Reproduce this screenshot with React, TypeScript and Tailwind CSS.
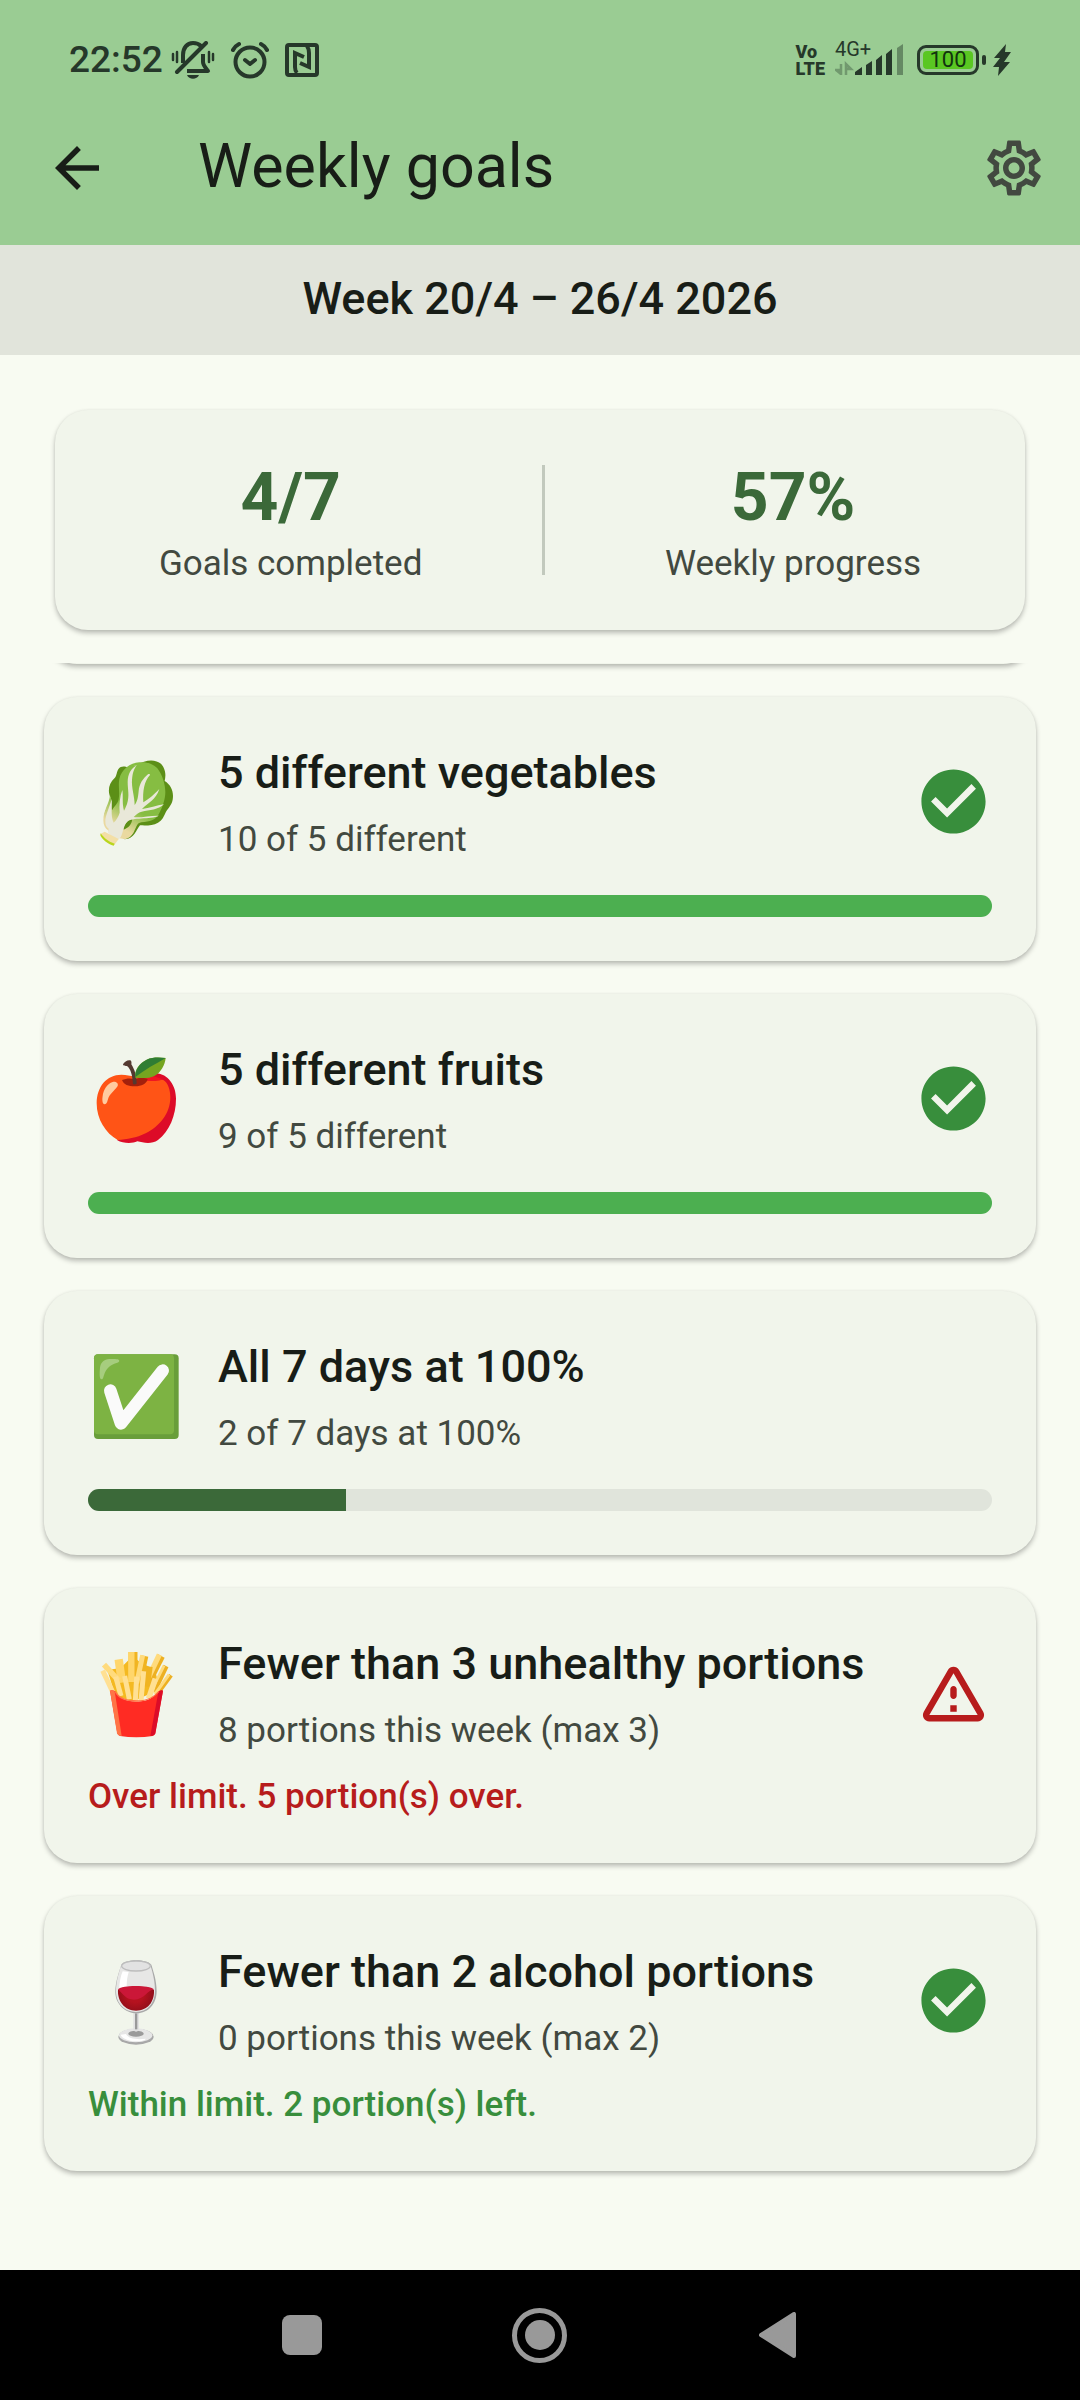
import type { ReactNode } from 'react';
import { MdArrowBack, MdCheckCircle, MdOutlineSettings } from 'react-icons/md';

type GoalStatus = 'done' | 'open' | 'over';

interface Goal {
  id: string;
  emoji: ReactNode;
  title: string;
  subtitle: string;
  status: GoalStatus;
  /** Share of the goal reached, 0 to 1. Limit goals have a note instead. */
  progress?: number;
  note?: string;
}

/* ---------- Emoji drawings ---------- */

function LeafyGreenEmoji() {
  return (
    <svg viewBox="96 50 270 270" className="size-[90px]" aria-hidden="true">
      <defs>
        <linearGradient id="leaf" x1="270" y1="90" x2="160" y2="290" gradientUnits="userSpaceOnUse">
          <stop offset="0.55" stopColor="#86bd42" />
          <stop offset="0.85" stopColor="#ead9a0" />
        </linearGradient>
      </defs>
      <path
        d="M252 64c22-8 48-4 58 16 8 16 7 28 4 42 20 12 28 34 24 56-3 16-14 26-20 36-6 14-12 26-24 33-16 9-36 9-54 8-12 14-16 40-46 42l-40-30c-14-12-24-28-20-46 4-20 16-32 18-48-10-20-6-44 12-60 6-6 6-20 12-28 6-8 20-8 28-2z"
        fill="#5c8f17"
      />
      <path
        d="M150 165c-2 25-20 45-20 75 0 15 6 25 14 30l14 20 34 6c14 0 24-10 30-22 8-14 8-26 22-28 26-2 42-6 52-24 10-17 20-44 20-66 0-22-8-52-24-72-12-14-34-20-54-18-28 2-54 22-60 50-4 20 2 40-2 60-2 14-14 22-20 34-4-16 0-30-6-45z"
        fill="url(#leaf)"
      />
      <path d="M190 260c8-14 14-22 27-25-2 16-10 26-26 33z" fill="#5c8f17" />
      <path
        d="M231 75c-18 8-28 28-28 50 0 24 6 40-2 66-4 10-6 15-9 20-6-20-2-45-5-62-8 20-10 46-8 68-4 12-10 22-18 30-10-20-4-50-6-72-4 20-20 50-19 70 0 10 4 16 10 20l-2 12 26 24 12-10c8-16 8-36 20-47 14-14 68-6 95-18-26-1-60 8-76 4 8-8 14-14 24-16 24-4 50-6 67-22-22 3-44 12-66 14 18-18 42-28 52-60-16 16-28 28-48 40-2-34 2-62 20-82 0-4-4-4-6-2-16 14-26 28-28 50-2 20-4 32-12 42 0-24-10-54-8-76 2-18 4-28 12-40 0-4-3-5-5-3z"
        fill="#e9e8d9"
      />
      <path d="M134 274l42 22-14 19c-18-8-30-18-41-34z" fill="#f3dfa6" />
      <path d="M122 279c10 14 24 26 42 31l-3 6c-18-4-34-18-40-31z" fill="#b9d61c" />
    </svg>
  );
}

function AppleEmoji() {
  return (
    <svg viewBox="66 70 270 270" className="size-[90px]" aria-hidden="true">
      <path
        d="M194 138c20-4 38-10 64-10 36 2 60 36 60 76 0 50-20 98-54 124-20 14-44 8-62 4-16 8-44 6-60-3l18-186z"
        fill="#dd0b28"
      />
      <path
        d="M80 218c0-50 30-86 74-86 16 0 26 4 40 4s24-4 38 0l-4 10c20 6 36 0 52 2 14 8 21 30 21 52 0 50-34 88-74 108-28 14-56 18-84 20-36-20-63-62-63-110z"
        fill="#ff5416"
      />
      <path d="M194 150c16-14 40-22 84-4-12 8-30 4-46 4z" fill="#ef1622" />
      <path
        d="M156 148c14-6 28-6 38-2 14-6 28-6 39 0-4 14-18 21-38 21s-34-5-39-19z"
        fill="#a3200c"
      />
      <path
        d="M159 101c4-8 14-14 22-12 4 2 4 8 3 12 10 16 16 34 16 58-4 3-8 3-11 1-2-26-6-44-18-54-4 0-12 0-12-5z"
        fill="#543930"
      />
      <path d="M196 141c-4-22 12-44 34-54 18-8 38-7 57-5-2 20-14 44-34 54-18 9-40 6-57 5z" fill="#75a520" />
      <path d="M196 139c-2-22 14-42 34-52 18-8 38-7 57-5-30 18-62 34-91 57z" fill="#2f7d33" />
      <path
        d="M98 196c2-18 14-38 30-42 10-2 18 4 15 12-4 8-20 20-27 34-4 10-4 20-12 21-7 0-8-14-6-25z"
        fill="#ffcba0"
      />
    </svg>
  );
}

function CheckMarkEmoji() {
  return (
    <svg viewBox="66 62 270 270" className="size-[90px]" aria-hidden="true">
      <rect x="72" y="72" width="254" height="254" rx="12" fill="#699e3a" />
      <path d="M84 72h216q12 0 12 12v216q0 12-12 12H84q-12 0-12-12V84q0-12 12-12z" fill="#7db343" />
      <path
        d="M90 112c2-16 12-25 28-26 12 0 22-1 28 2 4 3 1 7-4 9-20 6-32 16-38 32-4 10-4 18-9 18-8 0-6-22-5-35z"
        fill="#a6cd7e"
      />
      <path
        d="M121 181L153 279L278 121"
        fill="none"
        stroke="#fafafa"
        strokeWidth="38"
        strokeLinecap="round"
        strokeLinejoin="round"
      />
    </svg>
  );
}

function FriesEmoji() {
  return (
    <svg viewBox="66 52 270 270" className="size-[90px]" aria-hidden="true">
      <path d="M112 118l40-6 36-36 24 20 42 20 16 60-80 36-54-16z" fill="#f4b921" />
      <g fill="none" strokeLinecap="butt">
        <path d="M189 64v90" stroke="#f0b422" strokeWidth="27" />
        <path d="M184 64v90" stroke="#ffd66b" strokeWidth="19" />
        <path d="M224 76l-18 84" stroke="#f0b422" strokeWidth="22" />
        <path d="M218 74l-18 84" stroke="#ffdb7d" strokeWidth="15" />
        <path d="M274 76l-40 80" stroke="#edb022" strokeWidth="22" />
        <path d="M268 72l-38 80" stroke="#ffdb7d" strokeWidth="16" />
        <path d="M146 86l10 70" stroke="#ffd66b" strokeWidth="25" />
        <path d="M102 102l44 48" stroke="#ffdb7d" strokeWidth="17" />
        <path d="M238 108l-8 60" stroke="#f0b422" strokeWidth="20" />
        <path d="M288 106l-36 76" stroke="#edb022" strokeWidth="16" />
        <path d="M282 105l-36 72" stroke="#ffdb7d" strokeWidth="9" />
        <path d="M303 134l-44 60" stroke="#edb022" strokeWidth="13" />
        <path d="M297 132l-42 58" stroke="#ffdb7d" strokeWidth="9" />
        <path d="M98 120l30 64" stroke="#ffe093" strokeWidth="15" />
        <path d="M137 138l16 58" stroke="#ffe093" strokeWidth="15" />
        <path d="M164 136l14 70" stroke="#ffe093" strokeWidth="15" />
        <path d="M200 138l-4 74" stroke="#ffe093" strokeWidth="15" />
        <path d="M221 122l-8 88" stroke="#ffe093" strokeWidth="15" />
        <path d="M256 144l-20 60" stroke="#ffe093" strokeWidth="17" />
      </g>
      <path
        d="M120 180q6-3 16 2c8 16 26 31 64 31s52-15 66-31q8-5 13-2l-23 128q-2 6-8 8c-32 5-66 5-98 0q-6-2-8-8z"
        fill="#ff2b23"
      />
      <path d="M120 180q6-3 14 2l21 134q-12-2-14-8z" fill="#ff7446" />
      <path d="M279 180q-6-3-14 4l-24 132q12 0 15-8z" fill="#dc0c28" />
      <path d="M136 183c8 16 26 28 64 28s54-14 66-28" fill="none" stroke="#ff7446" strokeWidth="4" />
    </svg>
  );
}

function WineEmoji() {
  return (
    <svg viewBox="66 76 270 270" className="size-[90px]" aria-hidden="true">
      <defs>
        <radialGradient id="wine" cx="196" cy="190" r="62" gradientUnits="userSpaceOnUse">
          <stop offset="0.4" stopColor="#b5121f" />
          <stop offset="1" stopColor="#8a0d18" />
        </radialGradient>
      </defs>
      <ellipse cx="198" cy="318" rx="53" ry="24" fill="#a8a8a8" />
      <ellipse cx="197" cy="314" rx="50" ry="21" fill="#e6e6e6" />
      <path d="M152 312c4 12 26 20 46 20s26-4 30-8c-26 4-54 0-60-14z" fill="#fff" />
      <ellipse cx="198" cy="309" rx="23" ry="9" fill="#9b9b9b" />
      <path d="M190 244h17v54q-9 10-17 0z" fill="#e2e2e2" />
      <path d="M195 248h7v48h-7z" fill="#999" />
      <path
        d="M154 102c6-8 24-13 45-13s38 5 45 13c6 20 16 46 16 80 0 38-26 66-59 66s-65-26-65-64c0-32 12-62 18-82z"
        fill="#a9a9a9"
      />
      <path
        d="M154 102c6-7 24-11 44-11s36 5 43 12c6 20 14 46 14 78 0 38-24 63-57 63s-60-24-60-62c0-32 10-60 16-80z"
        fill="#e7e7e6"
      />
      <path d="M158 122c-6 14-10 34-10 52l22-6c0-18 2-30 6-44z" fill="#fff" />
      <path d="M144 178c14-14 92-14 108 0 2 36-20 62-54 62s-56-28-54-62z" fill="url(#wine)" />
      <path d="M144 176c14-13 92-13 108 0-20 2-28 31-60 31-24 0-32-16-48-31z" fill="#cb1738" />
      <ellipse cx="198" cy="106" rx="43" ry="15" fill="#e2e2e2" stroke="#bdbdbd" strokeWidth="4" />
    </svg>
  );
}

/* ---------- Data ---------- */

const goals: Goal[] = [
  {
    id: 'vegetables',
    emoji: <LeafyGreenEmoji />,
    title: '5 different vegetables',
    subtitle: '10 of 5 different',
    status: 'done',
    progress: 1,
  },
  {
    id: 'fruits',
    emoji: <AppleEmoji />,
    title: '5 different fruits',
    subtitle: '9 of 5 different',
    status: 'done',
    progress: 1,
  },
  {
    id: 'days',
    emoji: <CheckMarkEmoji />,
    title: 'All 7 days at 100%',
    subtitle: '2 of 7 days at 100%',
    status: 'open',
    progress: 2 / 7,
  },
  {
    id: 'unhealthy',
    emoji: <FriesEmoji />,
    title: 'Fewer than 3 unhealthy portions',
    subtitle: '8 portions this week (max 3)',
    status: 'over',
    note: 'Over limit. 5 portion(s) over.',
  },
  {
    id: 'alcohol',
    emoji: <WineEmoji />,
    title: 'Fewer than 2 alcohol portions',
    subtitle: '0 portions this week (max 2)',
    status: 'done',
    note: 'Within limit. 2 portion(s) left.',
  },
];

/* ---------- Status bar ---------- */

function BellOffIcon() {
  return (
    <svg viewBox="0 0 44 38" className="h-[38px] w-[44px]" fill="none" stroke="currentColor" aria-hidden="true">
      <g strokeWidth="4" strokeLinejoin="round">
        <path d="M12 22V14c0-7 4-12 10-12 4 0 6 1 8 3" />
        <path d="M32 13v8c0 3 2 5 5 9H16" />
        <path d="M6 31L35 2" strokeLinecap="round" />
      </g>
      <path d="M16 34h12c-2 5-10 5-12 0z" fill="currentColor" stroke="none" />
      <path d="M2 13v6M6 11v10M38 11v10M42 13v6" strokeWidth="2.5" strokeLinecap="round" />
    </svg>
  );
}

function AlarmIcon() {
  return (
    <svg viewBox="0 0 40 38" className="h-[38px] w-[40px]" fill="none" stroke="currentColor" aria-hidden="true">
      <circle cx="20" cy="21" r="14.5" strokeWidth="4" />
      <path d="M3 9q2-4 6-6M37 9q-2-4-6-6" strokeWidth="4" strokeLinecap="round" />
      <path d="M15 19l5 4 5-4" strokeWidth="4" strokeLinecap="round" strokeLinejoin="round" />
    </svg>
  );
}

function NfcIcon() {
  return (
    <svg viewBox="0 0 34 34" className="size-[34px]" fill="none" stroke="currentColor" aria-hidden="true">
      <rect x="2" y="2" width="30" height="30" rx="2" strokeWidth="4" />
      <path d="M19 14l-9-4v14q0 4 2 6M15 20l9 4V10q0-4-2-7" strokeWidth="4" />
    </svg>
  );
}

function SignalIcon() {
  return (
    <svg viewBox="0 0 68 34" className="h-[34px] w-[68px]" fill="currentColor" aria-hidden="true">
      <path
        d="M6 21v11M6 31l-5-4h5M11 32V21l5 5h-5"
        fill="none"
        stroke="currentColor"
        strokeWidth="2.5"
        opacity="0.35"
      />
      <path d="M20 29l7-5v8h-7zM31 22l6-4v14h-6zM41 17l6-5v20h-6zM51 11l6-5v26h-6z" />
      <path d="M62 5l6-4v31h-6z" opacity="0.45" />
    </svg>
  );
}

function BoltIcon() {
  return (
    <svg viewBox="0 0 18 32" className="h-[32px] w-[18px]" fill="currentColor" aria-hidden="true">
      <path d="M13 0L1 14h6l-7 9h6l-1 9L17 18h-6l7-10h-6z" />
    </svg>
  );
}

function StatusBar() {
  return (
    <div className="flex h-[91px] items-center justify-between px-[69px] pt-7 text-[#26382a]">
      <div className="flex items-center">
        <span className="text-[37px] leading-none font-medium">22:52</span>
        <span className="ml-2 flex items-center gap-[15px]">
          <BellOffIcon />
          <AlarmIcon />
          <NfcIcon />
        </span>
      </div>
      <div className="flex items-center">
        <div className="flex flex-col text-[18px] leading-[17px] font-black">
          <span>Vo</span>
          <span>LTE</span>
        </div>
        <div className="relative ml-[10px]">
          <SignalIcon />
          <span className="absolute -top-1 left-0 text-[20px] leading-none">4G+</span>
        </div>
        <div className="ml-[14px] flex items-center gap-[3px]">
          <div className="h-[30px] w-[62px] rounded-[9px] border-3 border-current p-[3px]">
            <div className="flex h-full items-center justify-center rounded-[4px] bg-[#5ac722] text-[22px] leading-none text-[#12330f]">
              100
            </div>
          </div>
          <div className="h-[10px] w-1 rounded-sm bg-current" />
        </div>
        <div className="ml-[7px]">
          <BoltIcon />
        </div>
      </div>
    </div>
  );
}

/* ---------- Goals ---------- */

function WarningIcon() {
  return (
    <svg viewBox="0 0 24 24" className="size-[77px]" fill="currentColor" role="img" aria-label="Over limit">
      <path d="M12 5.99L19.53 19H4.47L12 5.99M2.74 18c-.77 1.33.19 3 1.73 3h15.06c1.54 0 2.5-1.67 1.73-3L13.73 4.99c-.77-1.33-2.69-1.33-3.46 0L2.74 18zM11 11v2c0 .55.45 1 1 1s1-.45 1-1v-2c0-.55-.45-1-1-1s-1 .45-1 1zm0 5h2v2h-2z" />
    </svg>
  );
}

function GoalCard({ goal }: { goal: Goal }) {
  return (
    <li className="rounded-[33px] bg-[#f1f5eb] p-11 shadow-[0_3px_5px_rgba(0,0,0,0.25),0_0_3px_rgba(0,0,0,0.06)]">
      <div className="flex items-center gap-[33px]">
        <div className="flex w-[97px] shrink-0 justify-center">{goal.emoji}</div>
        <div className="min-w-0 flex-1">
          <h2 className="text-[45px] leading-[64px] font-medium whitespace-nowrap text-[#181d17]">{goal.title}</h2>
          <p className="mt-[13px] text-[35px] leading-[44px] text-[#424940]">{goal.subtitle}</p>
        </div>
        {goal.status === 'done' && (
          <MdCheckCircle className="size-[77px] shrink-0 text-[#388e3c]" role="img" aria-label="Completed" />
        )}
        {goal.status === 'over' && (
          <div className="shrink-0 text-[#b71c1c]">
            <WarningIcon />
          </div>
        )}
      </div>

      {goal.progress !== undefined && (
        <div
          role="progressbar"
          aria-label={goal.title}
          aria-valuenow={Math.round(goal.progress * 100)}
          className="mt-[33px] h-[22px] overflow-hidden rounded-full bg-[#e0e4db]"
        >
          <div
            className={goal.status === 'done' ? 'h-full bg-[#4caf50]' : 'h-full bg-[#3b6939]'}
            style={{ width: `${goal.progress * 100}%` }}
          />
        </div>
      )}

      {goal.note && (
        <p
          className={`mt-[22px] text-[35px] leading-[44px] font-medium ${
            goal.status === 'over' ? 'text-[#b71c1c]' : 'text-[#388e3c]'
          }`}
        >
          {goal.note}
        </p>
      )}
    </li>
  );
}

function Stat({ value, label }: { value: string; label: string }) {
  return (
    <div className="text-center">
      <p className="text-[66px] leading-[88px] font-bold text-[#3b6939]">{value}</p>
      <p className="text-[35px] leading-[44px] text-[#424940]">{label}</p>
    </div>
  );
}

/* ---------- System navigation ---------- */

function NavigationBar() {
  return (
    <nav className="flex h-[130px] justify-center bg-black text-[#999]" aria-label="System">
      <div className="grid w-[66%] grid-cols-3">
        <button type="button" aria-label="Recent apps" className="flex items-center justify-center">
          <span className="size-10 rounded-[8px] bg-current" />
        </button>
        <button type="button" aria-label="Home" className="flex items-center justify-center">
          <span className="flex size-[55px] items-center justify-center rounded-full border-5 border-current">
            <span className="size-[30px] rounded-full bg-current" />
          </span>
        </button>
        <button type="button" aria-label="Back" className="flex items-center justify-center">
          <svg viewBox="0 0 38 46" className="h-[46px] w-[38px]" fill="currentColor" aria-hidden="true">
            <path d="M2 23L35 2v42z" stroke="currentColor" strokeWidth="4" strokeLinejoin="round" />
          </svg>
        </button>
      </div>
    </nav>
  );
}

export default function App() {
  return (
    <div className="flex min-h-screen flex-col bg-[#f8fbf2] font-[Roboto,'Noto_Sans',sans-serif]">
      <header className="bg-[#9acc93]">
        <StatusBar />
        <div className="flex h-[154px] items-center pr-[33px] pl-11">
          <button type="button" aria-label="Back" className="text-[#181d17]">
            <MdArrowBack className="size-[66px]" />
          </button>
          <h1 className="mb-1 ml-[88px] flex-1 text-[61px] leading-[77px] text-[#181d17]">Weekly goals</h1>
          <button type="button" aria-label="Settings" className="text-[#424940]">
            <MdOutlineSettings className="size-[66px]" />
          </button>
        </div>
      </header>

      {/* Week */}
      <div className="bg-[#e1e4db] pt-[22px] pb-6 text-center text-[45px] leading-[64px] font-medium text-[#181d17]">
        Week 20/4 – 26/4 2026
      </div>

      <main className="flex-1">
        {/* Summary */}
        <section className="px-[55px] pt-[55px] pb-[33px]">
          <div className="flex items-center justify-around rounded-[33px] bg-[#f1f5eb] p-11 shadow-[0_3px_5px_rgba(0,0,0,0.25),0_0_3px_rgba(0,0,0,0.06)]">
            <Stat value="4/7" label="Goals completed" />
            <div className="h-[110px] w-[3px] bg-[#c2c9bd]" />
            <Stat value="57%" label="Weekly progress" />
          </div>
        </section>

        <section className="overflow-hidden px-11 pb-[99px]">
          <div
            aria-hidden="true"
            className="-mt-[65px] mb-[33px] h-[66px] rounded-[33px] bg-[#f1f5eb] shadow-[0_3px_5px_rgba(0,0,0,0.25),0_0_3px_rgba(0,0,0,0.06)]"
          />
          <ul className="flex flex-col gap-[33px]">
            {goals.map((goal) => (
              <GoalCard key={goal.id} goal={goal} />
            ))}
          </ul>
        </section>
      </main>

      <NavigationBar />
    </div>
  );
}
